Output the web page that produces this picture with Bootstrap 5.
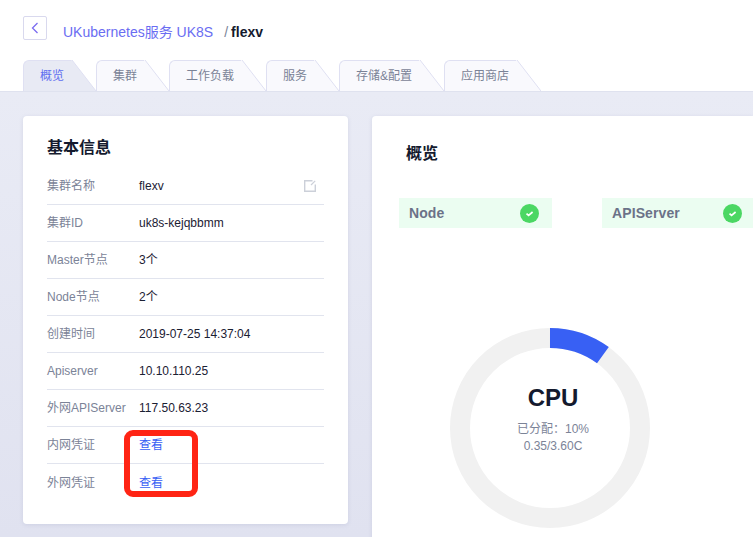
<!DOCTYPE html>
<html lang="zh-CN">
<head>
  <meta charset="UTF-8" />
  <title>UK8S flexv</title>
  <meta name="viewport" content="width=device-width, initial-scale=1.0" />
  <link href="https://cdn.jsdelivr.net/npm/bootstrap@5.3.0/dist/css/bootstrap.min.css" rel="stylesheet" />
  <style>
    html, body { height: 100%; }
    body {
      overflow: hidden;
      background: linear-gradient(#e9ebf5 92px, #e0e2f0);
      font-family: "Liberation Sans", "Noto Sans CJK SC", sans-serif;
      font-size: 12px;
      color: #1b2033;
    }
    .top-area { background: #fff; height: 92px; padding: 16px 0 0 23px; border-bottom: 1px solid #dfe2ef; }
    .back-btn {
      width: 24px; height: 24px;
      border: 1px solid #d9d9ee; border-radius: 2px;
      background: #fff;
    }
    .crumb { font-size: 14px; margin-left: 16px; line-height: 24px; padding-top: 4px; }
    .crumb-link { color: #6a6df2; text-decoration: none; }
    .crumb-sep { color: #7b8397; margin-left: 11px; margin-right: 3px; }
    .crumb-now { font-weight: 700; color: #141a2e; }
    .tab-strip { margin-top: 16px; height: 31px; }
    .tab-item { height: 31px; color: #7b8397; text-decoration: none; }
    .tab-face {
      padding: 0 8px 0 16px; line-height: 30px; height: 31px;
      background: #f9f9fd;
      border: 1px solid #dfe0f2; border-width: 1px 0 0 1px;
      border-top-left-radius: 6px;
    }
    .tab-item svg { display: block; margin-left: -1px; }
    .tab-item.is-active { color: #5f6ff0; }
    .tab-item.is-active .tab-face { background: #e8eaf4; }
    .page-body { padding: 24px 0 0 23px; gap: 24px; }
    .info-box, .over-box {
      background: #fff; border-radius: 4px;
      box-shadow: 0 1px 4px rgba(120, 125, 170, .18);
    }
    .info-box { flex: 0 0 325px; height: 408px; padding: 20px 24px 0; }
    .over-box { flex: 1 1 auto; min-width: 0; height: 440px; border-top-right-radius: 0; border-bottom-right-radius: 0; }
    .box-title { font-size: 16px; font-weight: 700; line-height: 22px; margin: 0; color: #141a2e; }
    .info-title { margin-top: 1px; margin-bottom: 9px; }
    .info-row { height: 37px; border-bottom: 1px solid #e1e4ee; line-height: 36px; }
    .info-row:last-child { border-bottom: 0; }
    .info-key { flex: 0 0 92px; color: #7b8397; }
    .info-val { flex: 1 1 auto; }
    .info-val a { color: #3860f4; text-decoration: none; }
    .edit-ico { margin-right: 8px; }
    .mark-box {
      position: absolute; left: 101px; top: 314px;
      width: 74px; height: 67px;
      border: 6px solid #ff2414; border-radius: 9px;
    }
    .over-title { padding: 27px 0 0 34px; }
    .status-list { margin: 33px 0 0 27px; gap: 50px; }
    .status-pill {
      flex: 0 0 153px; height: 30px; padding: 0 13px 0 10px;
      background: #ebfdf1;
      font-size: 14px; font-weight: 700; color: #6b7288; letter-spacing: .1px;
    }
    .status-pill:last-child { flex: 1 1 auto; padding-right: 11px; }
    .ring-wrap { width: 200px; height: 200px; margin: 100px 0 0 78px; }
    .ring-text { position: absolute; left: 3px; right: -3px; top: 56px; text-align: center; }
    .ring-name { font-size: 24px; font-weight: 700; line-height: 28px; color: #141a2e; }
    .ring-sub { color: #7b8397; line-height: 17px; margin-top: 9px; }
  </style>
</head>
<body>
  <div class="top-area">
    <div class="d-flex align-items-start">
      <a href="#" class="back-btn d-flex align-items-center justify-content-center">
        <svg width="8" height="12" viewBox="0 0 8 12" fill="none" stroke="#7b6cf0" stroke-width="1.3"><path d="M6.5 1 L1.5 6 L6.5 11"/></svg>
      </a>
      <div class="crumb">
        <a href="#" class="crumb-link">UKubernetes服务 UK8S</a><span class="crumb-sep">/</span><span class="crumb-now">flexv</span>
      </div>
    </div>
    <div class="tab-strip d-flex" id="tabStrip"></div>
  </div>

  <div class="page-body d-flex">
    <div class="info-box position-relative">
      <h5 class="box-title info-title">基本信息</h5>
      <div id="infoRows"></div>
      <div class="mark-box"></div>
    </div>

    <div class="over-box">
      <h5 class="box-title over-title">概览</h5>
      <div class="status-list d-flex">
        <div class="status-pill d-flex align-items-center justify-content-between">
          <span>Node</span>
          <svg width="19" height="19" viewBox="0 0 19 19"><circle cx="9.5" cy="9.5" r="9.5" fill="#4bd763"/><path d="M6.5 9.6 L8.6 11.4 L12.6 8" fill="none" stroke="#fff" stroke-width="1.7"/></svg>
        </div>
        <div class="status-pill d-flex align-items-center justify-content-between">
          <span>APIServer</span>
          <svg width="19" height="19" viewBox="0 0 19 19"><circle cx="9.5" cy="9.5" r="9.5" fill="#4bd763"/><path d="M6.5 9.6 L8.6 11.4 L12.6 8" fill="none" stroke="#fff" stroke-width="1.7"/></svg>
        </div>
      </div>
      <div class="ring-wrap position-relative">
        <svg width="200" height="200" viewBox="0 0 200 200" class="d-block">
          <circle cx="100" cy="100" r="90" fill="none" stroke="#f1f1f1" stroke-width="20"/>
          <path d="M100 10 A90 90 0 0 1 152.9 27.2" fill="none" stroke="#3860f4" stroke-width="20"/>
        </svg>
        <div class="ring-text">
          <div class="ring-name">CPU</div>
          <div class="ring-sub">已分配：10%<br>0.35/3.60C</div>
        </div>
      </div>
    </div>
  </div>

  <script src="https://cdn.jsdelivr.net/npm/bootstrap@5.3.0/dist/js/bootstrap.bundle.min.js"></script>
  <script>
    const tabs = ["概览", "集群", "工作负载", "服务", "存储&配置", "应用商店"];
    const tabStrip = document.getElementById("tabStrip");
    tabs.forEach((name, i) => {
      const fill = i === 0 ? "#e8eaf4" : "#f9f9fd";
      tabStrip.insertAdjacentHTML("beforeend", `
        <a href="#" class="tab-item d-flex ${i === 0 ? "is-active" : ""}">
          <span class="tab-face">${name}</span>
          <svg width="25" height="31" viewBox="0 0 25 31"><path d="M0 0 H1 L25 31 H0 Z" fill="${fill}"/><path d="M1 0 L25 31" fill="none" stroke="#dfe0f2"/></svg>
        </a>`);
    });

    const editIcon = `<svg class="edit-ico" width="12" height="12" viewBox="0 0 12 12" fill="none" stroke="#ccd0d9" stroke-width="1.4"><path d="M8.5 .8 H.7 V11.3 H11.3 V4.5"/><path d="M7 5 L11.2 .8" stroke-width="1.2"/></svg>`;
    const rows = [
      ["集群名称", "flexv", editIcon],
      ["集群ID", "uk8s-kejqbbmm"],
      ["Master节点", "3个"],
      ["Node节点", "2个"],
      ["创建时间", "2019-07-25 14:37:04"],
      ["Apiserver", "10.10.110.25"],
      ["外网APIServer", "117.50.63.23"],
      ["内网凭证", '<a href="#">查看</a>'],
      ["外网凭证", '<a href="#">查看</a>']
    ];
    const infoRows = document.getElementById("infoRows");
    rows.forEach(r => {
      infoRows.insertAdjacentHTML("beforeend", `
        <div class="info-row d-flex align-items-center">
          <div class="info-key">${r[0]}</div>
          <div class="info-val">${r[1]}</div>
          ${r[2] || ""}
        </div>`);
    });
  </script>
</body>
</html>
